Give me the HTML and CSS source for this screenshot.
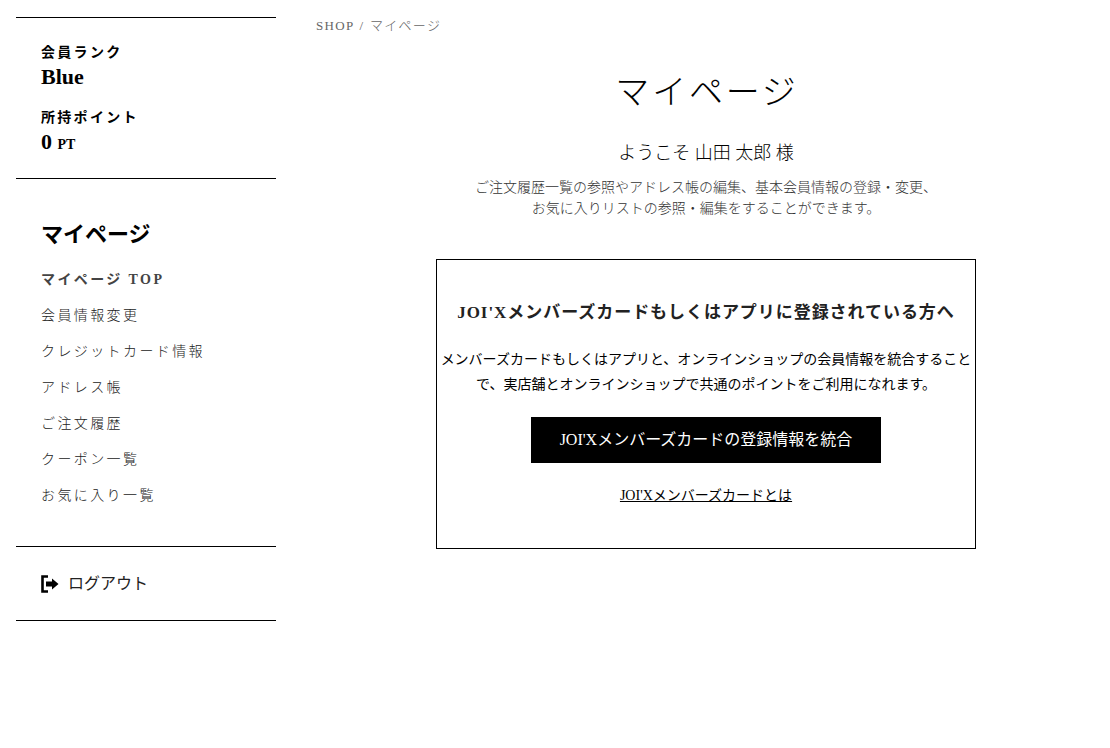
FILE: index.html
```html
<!DOCTYPE html>
<html lang="ja">
    <head>
        <meta charset="utf-8">
        <title>マイページ</title>
        <link rel="stylesheet" href="styles.css">
    </head>
    <body>
        <aside class="side">
            <section class="status">
                <p class="status-label">会員ランク</p>
                <p class="status-value">Blue</p>
                <p class="status-label status-label-next">所持ポイント</p>
                <p class="status-value">0 <small>PT</small></p>
            </section>

            <nav class="side-nav">
                <h2>マイページ</h2>
                <ul>
                    <li><a class="current" href="#">マイページ TOP</a></li>
                    <li><a href="#">会員情報変更</a></li>
                    <li><a href="#">クレジットカード情報</a></li>
                    <li><a href="#">アドレス帳</a></li>
                    <li><a href="#">ご注文履歴</a></li>
                    <li><a href="#">クーポン一覧</a></li>
                    <li><a href="#">お気に入り一覧</a></li>
                </ul>
            </nav>

            <a class="logout" href="#">
                <svg width="18" height="18" viewBox="0 0 18 18">
                    <path d="M7 1.5H1.5v15H7" fill="none" stroke="#000" stroke-width="2.6"/>
                    <path d="M5 6.5h6V3.5l6.5 5.5-6.5 5.5v-3H5z" fill="#000"/>
                </svg>
                <span>ログアウト</span>
            </a>
        </aside>

        <main class="content">
            <p class="crumbs">SHOP / マイページ</p>
            <h1>マイページ</h1>
            <p class="welcome">ようこそ 山田 太郎 様</p>
            <p class="lead">ご注文履歴一覧の参照やアドレス帳の編集、基本会員情報の登録・変更、<br>お気に入りリストの参照・編集をすることができます。</p>

            <section class="card-box">
                <h3>JOI'Xメンバーズカードもしくはアプリに登録されている方へ</h3>
                <p>メンバーズカードもしくはアプリと、オンラインショップの会員情報を統合することで、実店舗とオンラインショップで共通のポイントをご利用になれます。</p>
                <a class="btn" href="#">JOI'Xメンバーズカードの登録情報を統合</a>
                <a class="about" href="#">JOI'Xメンバーズカードとは</a>
            </section>
        </main>
    </body>
</html>
```

FILE: styles.css
```css
* { box-sizing: border-box; }

body {
    margin: 0;
    padding: 17px 14px 0 16px;
    display: flex;
    gap: 40px;
    background: #fff;
    color: #000;
    font-family: "Liberation Serif", "Noto Sans CJK JP", serif;
    font-size: 14px;
    font-weight: 300;
}

p, h1, h2, h3, ul { margin: 0; padding: 0; }

a { color: inherit; text-decoration: none; }

.side {
    width: 260px;
    flex: none;
}

.status {
    height: 162px;
    padding: 25px 25px 0;
    border-top: 1px solid #000;
    border-bottom: 1px solid #000;
}
.status-label {
    font-size: 14px;
    line-height: 20px;
    letter-spacing: 2.3px;
    font-weight: bold;
}
.status-label-next { margin-top: 17px; }
.status-value {
    font-size: 22px;
    line-height: 28px;
    font-weight: bold;
}
.status-value small { font-size: 14px; }

.side-nav {
    height: 368px;
    padding: 42px 25px 0;
    border-bottom: 1px solid #000;
}
.side-nav h2 {
    font-size: 22px;
    line-height: 28px;
}
.side-nav ul {
    margin-top: 13px;
    list-style: none;
    color: #222;
}
.side-nav li {
    height: 36px;
    line-height: 36px;
    letter-spacing: 2.4px;
}
.side-nav .current { font-weight: bold; color: #444; }

.logout {
    height: 74px;
    padding: 0 25px;
    display: flex;
    align-items: center;
    gap: 9px;
    border-bottom: 1px solid #000;
    font-size: 16px;
    font-weight: normal;
    color: #222;
}
.logout span { margin-bottom: 4px; }

.content {
    flex: 1;
    text-align: center;
}
.crumbs {
    text-align: left;
    font-size: 13px;
    line-height: 18px;
    letter-spacing: 1.3px;
    word-spacing: 1px;
    color: #666;
}
h1 {
    margin-top: 36px;
    padding-left: 2px;
    font-size: 34px;
    line-height: 44px;
    font-weight: 300;
    letter-spacing: 2.8px;
}
.welcome {
    margin-top: 26px;
    font-size: 18px;
    line-height: 24px;
}
.lead {
    margin-top: 12px;
    line-height: 21px;
    color: #333;
}

.card-box {
    width: 540px;
    height: 290px;
    margin: 40px auto 0;
    padding: 38px 3px 0;
    border: 1px solid #000;
    font-weight: normal;
}
.card-box h3 {
    font-size: 17px;
    line-height: 30px;
    letter-spacing: .95px;
    color: #222;
}
.card-box p {
    margin-top: 19px;
    line-height: 25px;
}
.btn {
    display: block;
    width: 350px;
    height: 46px;
    margin: 20px auto 0;
    background: #000;
    color: #fff;
    font-size: 16px;
    line-height: 46px;
}
.about {
    display: inline-block;
    margin-top: 23px;
    line-height: 20px;
    text-decoration: underline;
}
```
